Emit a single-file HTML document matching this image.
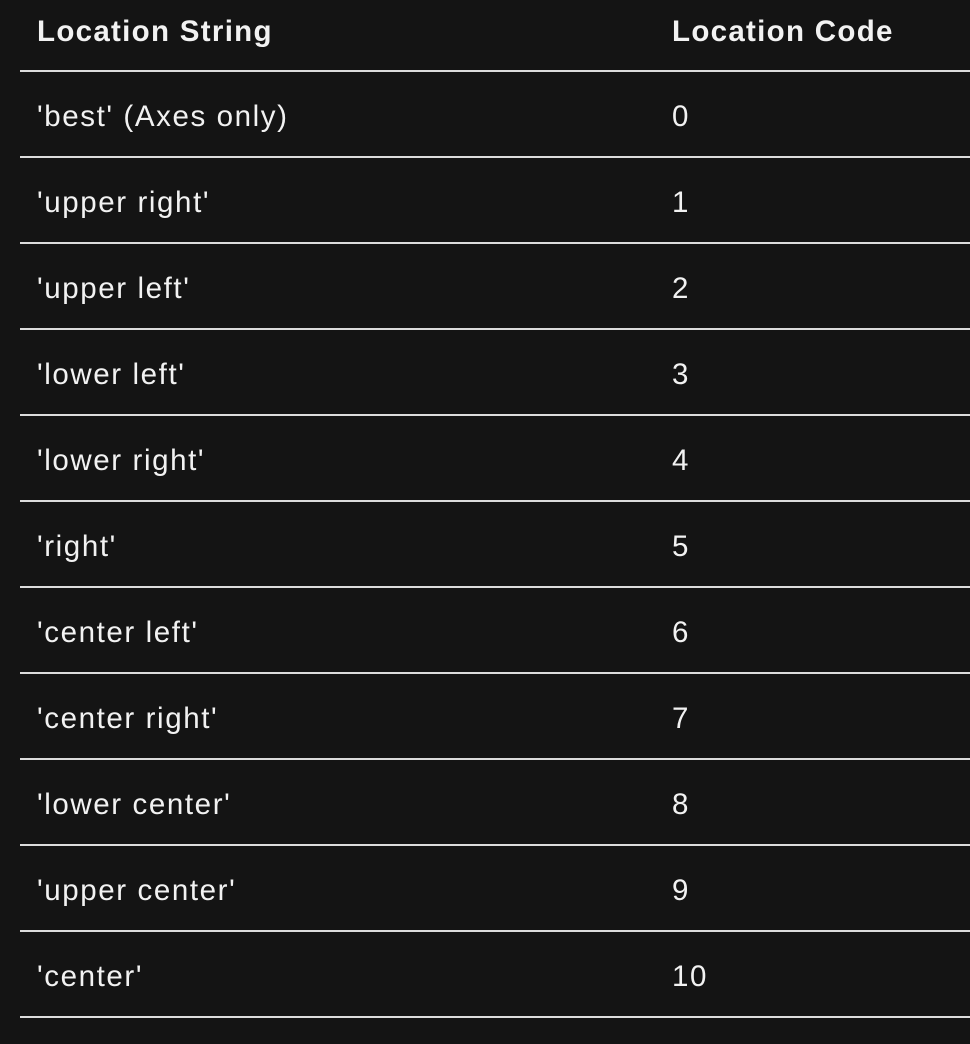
<!DOCTYPE html>
<html><head><style>
html,body{margin:0;padding:0;background:#141414;width:970px;height:1044px;overflow:hidden}
body{font-family:"Liberation Sans",sans-serif;color:#f2f2f2;font-size:29.5px}
.row{position:absolute;left:20px;width:950px;height:84px;border-bottom:2px solid #dcdcdc}
.row span{position:absolute;top:2px;line-height:86px;letter-spacing:1.6px}
.c1{left:17px}.c2{left:652px}
.h{font-weight:bold}
.h span{letter-spacing:1.3px}
</style></head><body>
<div class="row h" style="top:-14px;height:84px"><span class="c1" style="line-height:88px">Location String</span><span class="c2" style="line-height:88px">Location Code</span></div>
<div class="row" style="top:72px"><span class="c1">'best' (Axes only)</span><span class="c2">0</span></div>
<div class="row" style="top:158px"><span class="c1">'upper right'</span><span class="c2">1</span></div>
<div class="row" style="top:244px"><span class="c1">'upper left'</span><span class="c2">2</span></div>
<div class="row" style="top:330px"><span class="c1">'lower left'</span><span class="c2">3</span></div>
<div class="row" style="top:416px"><span class="c1">'lower right'</span><span class="c2">4</span></div>
<div class="row" style="top:502px"><span class="c1">'right'</span><span class="c2">5</span></div>
<div class="row" style="top:588px"><span class="c1">'center left'</span><span class="c2">6</span></div>
<div class="row" style="top:674px"><span class="c1">'center right'</span><span class="c2">7</span></div>
<div class="row" style="top:760px"><span class="c1">'lower center'</span><span class="c2">8</span></div>
<div class="row" style="top:846px"><span class="c1">'upper center'</span><span class="c2">9</span></div>
<div class="row" style="top:932px"><span class="c1">'center'</span><span class="c2">10</span></div>
</body></html>
